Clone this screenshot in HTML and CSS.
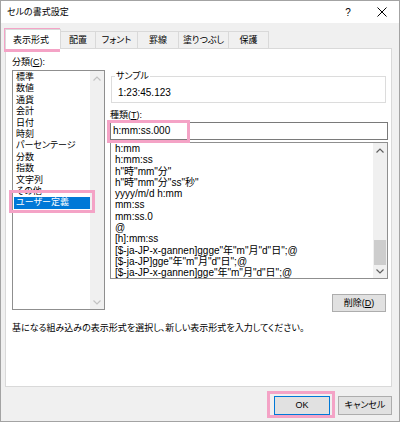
FILE: index.html
```html
<!DOCTYPE html>
<html lang="ja">
<head>
<meta charset="utf-8">
<title>セルの書式設定</title>
<link rel="stylesheet" href="styles.css">
</head>
<body>
<div class="window">
  <div class="titlebar">
    <span class="title">セルの書式設定</span>
    <span class="tb-btn help">?</span>
    <span class="tb-btn close"><svg width="10" height="10" viewBox="0 0 10 10"><path d="M0.5 0.5L9.5 9.5M9.5 0.5L0.5 9.5" stroke="#000" stroke-width="1" fill="none"/></svg></span>
  </div>
  <div class="content">
    <div class="tabs">
      <div class="tab active">表示形式</div>
      <div class="tab tab-align">配置</div>
      <div class="tab tab-font">フォント</div>
      <div class="tab tab-border">罫線</div>
      <div class="tab tab-fill">塗りつぶし</div>
      <div class="tab tab-protect">保護</div>
    </div>
    <div class="panel">
      <div class="cols">
        <div class="col-left">
          <div class="label">分類(<u>C</u>):</div>
          <div class="listbox cat">
            <ul class="items">
              <li>標準</li>
              <li>数値</li>
              <li>通貨</li>
              <li>会計</li>
              <li>日付</li>
              <li>時刻</li>
              <li>パーセンテージ</li>
              <li>分数</li>
              <li>指数</li>
              <li>文字列</li>
              <li>その他</li>
              <li class="sel">ユーザー定義</li>
            </ul>
            <div class="scroll disabled">
              <div class="arrow"><svg width="8" height="5" viewBox="0 0 8 5"><path d="M0.5 4.5L4 1L7.5 4.5" fill="none" stroke="currentColor" stroke-width="1.2"/></svg></div>
              <div class="track"></div>
              <div class="arrow"><svg width="8" height="5" viewBox="0 0 8 5"><path d="M0.5 0.5L4 4L7.5 0.5" fill="none" stroke="currentColor" stroke-width="1.2"/></svg></div>
            </div>
          </div>
        </div>
        <div class="col-right">
          <fieldset class="sample">
            <legend>サンプル</legend>
            <div class="sample-value">1:23:45.123</div>
          </fieldset>
          <div class="label type-label">種類(<u>T</u>):</div>
          <div class="input">h:mm:ss.000</div>
          <div class="listbox fmt">
            <ul class="items">
              <li>h:mm</li>
              <li>h:mm:ss</li>
              <li>h"時"mm"分"</li>
              <li>h"時"mm"分"ss"秒"</li>
              <li>yyyy/m/d h:mm</li>
              <li>mm:ss</li>
              <li>mm:ss.0</li>
              <li>@</li>
              <li>[h]:mm:ss</li>
              <li>[$-ja-JP-x-gannen]ggge"年"m"月"d"日";@</li>
              <li>[$-ja-JP]gge"年"m"月"d"日";@</li>
              <li>[$-ja-JP-x-gannen]gge"年"m"月"d"日";@</li>
            </ul>
            <div class="scroll">
              <div class="arrow"><svg width="8" height="5" viewBox="0 0 8 5"><path d="M0.5 4.5L4 1L7.5 4.5" fill="none" stroke="currentColor" stroke-width="1.2"/></svg></div>
              <div class="track"></div>
              <div class="thumb"></div>
              <div class="arrow"><svg width="8" height="5" viewBox="0 0 8 5"><path d="M0.5 0.5L4 4L7.5 0.5" fill="none" stroke="currentColor" stroke-width="1.2"/></svg></div>
            </div>
          </div>
          <div class="btn-row"><button class="btn del">削除(<u>D</u>)</button></div>
        </div>
      </div>
      <p class="desc">基になる組み込みの表示形式を選択し、新しい表示形式を入力してください。</p>
    </div>
    <div class="footer">
      <button class="btn ok">OK</button>
      <button class="btn cancel">キャンセル</button>
    </div>
  </div>
</div>
<div class="mark mark-tab"></div>
<div class="mark mark-cat"></div>
<div class="mark mark-input"></div>
<div class="mark mark-ok"></div>
</body>
</html>
```

FILE: styles.css
```css
* { box-sizing: border-box; }
html, body { margin: 0; padding: 0; }
body {
  position: relative;
  width: 400px;
  height: 422px;
  overflow: hidden;
  background: #f0f0f0;
  font-family: "Liberation Sans", "Noto Sans CJK JP", sans-serif;
  font-size: 9px;
  color: #000;
  font-feature-settings: "palt";
}
.window {
  width: 400px;
  height: 422px;
  border: 1px solid #a3a3a3;
  background: #f0f0f0;
  display: flex;
  flex-direction: column;
}
.titlebar {
  height: 22px;
  background: #fff;
  display: flex;
  align-items: center;
  padding-left: 6px;
  flex: none;
}
.title { flex: 1; line-height: 12px; }
.tb-btn {
  width: 34px;
  height: 22px;
  display: flex;
  align-items: center;
  justify-content: center;
}
.help { font-size: 10px; }
.content {
  flex: 1;
  display: flex;
  flex-direction: column;
  padding: 6px 7px 0 4px;
}
.tabs {
  display: flex;
  align-items: flex-end;
  height: 20px;
  margin-bottom: -1px;
}
.tab {
  height: 18px;
  line-height: 17px;
  text-align: center;
  border: 1px solid #d9d9d9;
  border-left: none;
  border-bottom: none;
  background: #f0f0f0;
}
.tab-align { width: 35px; }
.tab-font { width: 42px; }
.tab-border { width: 41px; }
.tab-fill { width: 50px; }
.tab-protect { width: 40px; }
.tab.active {
  position: relative;
  z-index: 1;
  height: 20px;
  line-height: 20px;
  text-align: left;
  padding: 0 11px 0 7px;
  background: #fff;
  border-left: 1px solid #d9d9d9;
}
.panel {
  height: 339px;
  background: #fff;
  border: 1px solid #d9d9d9;
  flex: none;
}
.cols {
  display: flex;
  align-items: flex-start;
  gap: 5px;
  padding: 7px 0 0 6px;
}
.col-left { width: 93px; }
.col-right { width: 278px; }
.label { line-height: 12px; height: 12px; }
.listbox {
  display: flex;
  border: 1px solid #8f8f8f;
  background: #fff;
}
.listbox.cat { margin-top: 2px; height: 240px; }
.items {
  list-style: none;
  margin: 0;
  padding: 0;
  flex: 1;
  overflow: hidden;
  white-space: nowrap;
}
.cat .items { padding: 1px 0 0 1px; }
.cat .items li { line-height: 11.4px; height: 11.4px; padding-left: 2px; }
.cat .items li.sel { background: #0078d7; color: #fff; }
.scroll {
  width: 14px;
  display: flex;
  flex-direction: column;
  background: #f0f0f0;
  color: #606060;
}
.scroll.disabled { color: #c2c2c2; }
.arrow {
  height: 14px;
  display: flex;
  align-items: center;
  justify-content: center;
  flex: none;
}
.track { flex: 1; }
.thumb { height: 25px; background: #cdcdcd; flex: none; margin: 0 1px; }
.sample {
  margin: 14px 2px 0 1px;
  padding: 5px 3px 3px 3px;
  border: 1px solid #dcdcdc;
  min-width: 0;
}
.sample legend {
  padding: 0 1px;
  line-height: 12px;
}
.sample-value {
  font-size: 10px;
  line-height: 12px;
  padding-left: 3px;
}
.type-label { margin-top: 6px; }
.input {
  margin-top: 1px;
  height: 18px;
  border: 1px solid #7a7a7a;
  font-size: 10px;
  line-height: 16px;
  padding-left: 2px;
}
.listbox.fmt { margin-top: 2px; height: 137px; }
.fmt .items { font-size: 10px; padding-left: 4px; }
.fmt .items li { line-height: 11.3px; height: 11.3px; }
.fmt .scroll .arrow:last-child { height: 13px; }
.btn-row {
  display: flex;
  justify-content: flex-end;
  margin-top: 15px;
  padding-right: 2px;
}
.btn {
  font-family: inherit;
  font-size: 9px;
  font-feature-settings: "palt";
  color: #000;
  background: #e1e1e1;
  border: 1px solid #adadad;
  border-radius: 0;
  padding: 0;
  margin: 0;
  height: 19px;
  line-height: 17px;
}
.btn.del { width: 54px; height: 18px; line-height: 16px; }
.desc {
  margin: 10px 0 0 6px;
  line-height: 12px;
}
.footer {
  display: flex;
  justify-content: flex-end;
  gap: 8px;
  padding-top: 9px;
}
.btn.ok { width: 56px; border-color: #0078d7; }
.btn.cancel { width: 54px; }
.mark {
  position: absolute;
  border: 3px solid #f4a3c6;
}
.mark-tab { left: 4px; top: 28px; width: 56px; height: 24px; }
.mark-cat { left: 9px; top: 190px; width: 86px; height: 23px; }
.mark-input { left: 107px; top: 120px; width: 83px; height: 23px; }
.mark-ok { left: 267px; top: 391px; width: 68px; height: 27px; }
```
